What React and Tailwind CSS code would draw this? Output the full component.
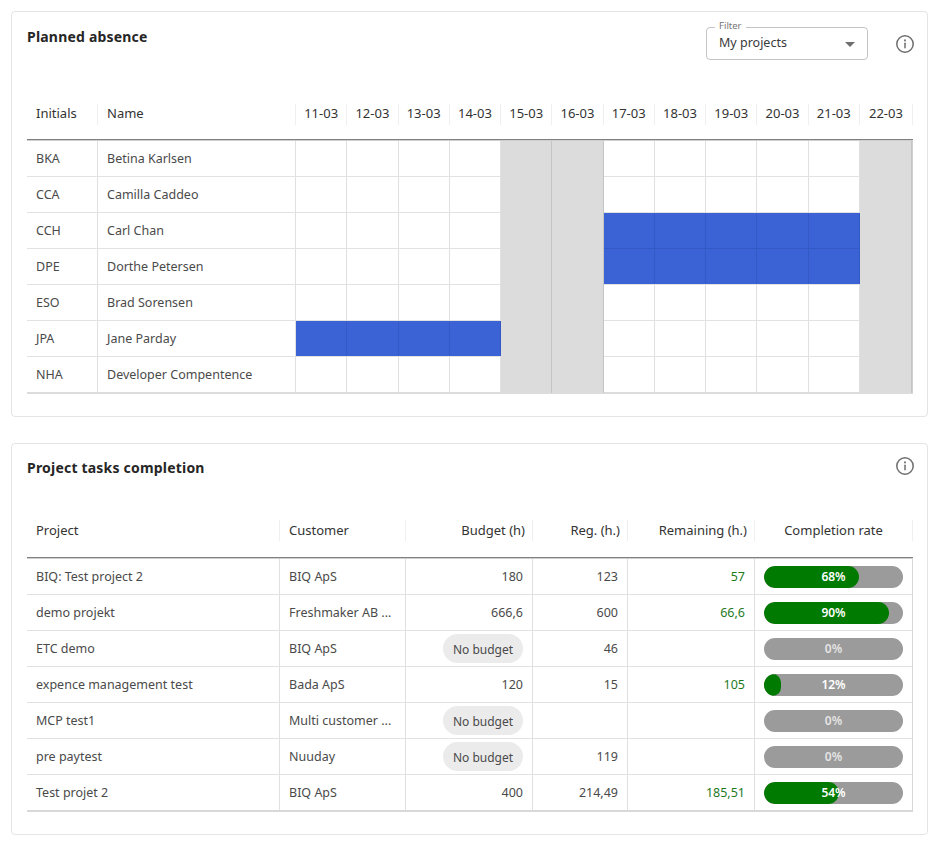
import React from 'react';

const ABSENCE_DAYS = ['11-03', '12-03', '13-03', '14-03', '15-03', '16-03', '17-03', '18-03', '19-03', '20-03', '21-03', '22-03'];
const WEEKEND = [4, 5, 11];

const PEOPLE = [
  { initials: 'BKA', name: 'Betina Karlsen', off: [] },
  { initials: 'CCA', name: 'Camilla Caddeo', off: [] },
  { initials: 'CCH', name: 'Carl Chan', off: [6, 7, 8, 9, 10] },
  { initials: 'DPE', name: 'Dorthe Petersen', off: [6, 7, 8, 9, 10] },
  { initials: 'ESO', name: 'Brad Sorensen', off: [] },
  { initials: 'JPA', name: 'Jane Parday', off: [0, 1, 2, 3] },
  { initials: 'NHA', name: 'Developer Compentence', off: [] },
];

const PROJECTS = [
  { project: 'BIQ: Test project 2', customer: 'BIQ ApS', budget: '180', reg: '123', remaining: '57', rate: 68 },
  { project: 'demo projekt', customer: 'Freshmaker AB ...', budget: '666,6', reg: '600', remaining: '66,6', rate: 90 },
  { project: 'ETC demo', customer: 'BIQ ApS', budget: null, reg: '46', remaining: '', rate: 0 },
  { project: 'expence management test', customer: 'Bada ApS', budget: '120', reg: '15', remaining: '105', rate: 12 },
  { project: 'MCP test1', customer: 'Multi customer ...', budget: null, reg: '', remaining: '', rate: 0 },
  { project: 'pre paytest', customer: 'Nuuday', budget: null, reg: '119', remaining: '', rate: 0 },
  { project: 'Test projet 2', customer: 'BIQ ApS', budget: '400', reg: '214,49', remaining: '185,51', rate: 54 },
];

const ABSENCE_GRID = 'grid grid-cols-[71px_198px_repeat(11,51.27px)_minmax(0,1fr)]';
const TASKS_GRID = 'grid grid-cols-[253px_126px_127px_95px_127px_minmax(0,1fr)]';

const InfoIcon = () => (
  <svg width="20" height="20" viewBox="0 0 20 20" fill="none" stroke="#6f6f6f" strokeWidth="1.5" strokeLinecap="round" className="shrink-0">
    <circle cx="10" cy="10" r="8.2" />
    <path d="M10 9.2v4.6" />
    <path d="M10 6.2v.3" strokeWidth="1.9" />
  </svg>
);

const HeadCell = ({ children, align = 'left' }) => (
  <div className={`flex h-[21px] items-center whitespace-nowrap border-r border-[#efefef] ${align === 'right' ? 'justify-end pr-[7px]' : align === 'center' ? 'justify-center' : 'px-[9px]'}`}>
    {children}
  </div>
);

const ProgressBar = ({ rate }) => (
  <div className="relative h-[22px] w-full overflow-hidden rounded-full bg-[#9b9b9b]">
    {rate > 0 && <div className="h-full rounded-full bg-[#007a00]" style={{ width: `${rate}%` }} />}
    <span className={`absolute inset-0 flex items-center justify-center text-[12px] font-semibold ${rate > 0 ? 'text-white' : 'text-[#e4e4e4]'}`}>
      {rate}%
    </span>
  </div>
);

const PlannedAbsence = () => (
  <section className="rounded-[4px] border border-[#e4e4e4] bg-white pb-[22px] pl-[15px] pr-[14px]">
    <div className="flex h-[85px] items-start justify-between">
      <h2 className="mt-[14px] text-[14px] font-bold tracking-[0.2px] text-[#262626]">Planned absence</h2>
      <div className="-mr-[2px] mt-[15px] flex items-center gap-[27px]">
        <div className="relative flex h-[33px] w-[162px] items-center justify-between rounded-[4px] border border-[#c4c4c4] px-[12px]">
          <span className="absolute -top-[8px] left-[8px] bg-white px-[4px] text-[9.5px] leading-[12px] text-[#757575]">Filter</span>
          <span className="text-[12.5px] text-[#3a3a3a]">My projects</span>
          <svg width="10" height="5" viewBox="0 0 10 5" className="mt-[2px]"><path d="M0 0h10L5 5z" fill="#6f6f6f" /></svg>
        </div>
        <InfoIcon />
      </div>
    </div>

    <div className={`${ABSENCE_GRID} h-[43px] items-center border-b border-[#808080] pb-[8px] text-[13px] text-[#333]`}>
      <HeadCell>Initials</HeadCell>
      <HeadCell>Name</HeadCell>
      {ABSENCE_DAYS.map((day) => (
        <HeadCell key={day} align="center">{day}</HeadCell>
      ))}
    </div>

    <div className="border-b-2 border-t border-[#dcdcdc] border-r border-r-[#cfcfcf] border-t-[#cfcfcf]">
      {PEOPLE.map((p, i) => {
        const isLast = i === PEOPLE.length - 1;
        return (
          <div key={p.initials} className={`${ABSENCE_GRID} text-[12.5px] text-[#4a4a4a] ${isLast ? 'h-[35px]' : 'h-[36px] border-b border-[#e2e2e2]'}`}>
            <div className="flex items-center border-r border-[#e0e0e0] px-[9px] pt-[1px]">{p.initials}</div>
            <div className="flex items-center border-r border-[#e0e0e0] px-[9px] pt-[1px]">{p.name}</div>
            {ABSENCE_DAYS.map((day, d) => {
              const weekend = WEEKEND.includes(d);
              const off = p.off.includes(d);
              const nextOff = !isLast && PEOPLE[i + 1].off.includes(d);
              let cell = 'border-[#e0e0e0]';
              if (off) cell = nextOff ? '-mb-px border-b border-[#3459c4] bg-[#3b63d6]' : 'border-[#3459c4] bg-[#3b63d6]';
              else if (weekend) cell = '-mb-px border-[#c4c4c4] bg-[#dcdcdc]';
              return <div key={day} className={`border-r ${cell}`} />;
            })}
          </div>
        );
      })}
    </div>
  </section>
);

const ProjectTasks = () => (
  <section className="rounded-[4px] border border-[#e4e4e4] bg-white pb-[22px] pl-[15px] pr-[14px]">
    <div className="flex h-[65px] items-start justify-between">
      <h2 className="mt-[13px] text-[14px] font-bold tracking-[0.2px] text-[#262626]">Project tasks completion</h2>
      <div className="-mr-[2px] mt-[12px]"><InfoIcon /></div>
    </div>

    <div className={`${TASKS_GRID} h-[49px] items-center border-b border-[#808080] pb-[5px] text-[13px] text-[#333]`}>
      <HeadCell>Project</HeadCell>
      <HeadCell>Customer</HeadCell>
      <HeadCell align="right">Budget (h)</HeadCell>
      <HeadCell align="right">Reg. (h.)</HeadCell>
      <HeadCell align="right">Remaining (h.)</HeadCell>
      <HeadCell align="center">Completion rate</HeadCell>
    </div>

    <div className="border-b-2 border-r border-t border-[#d8d8d8] border-t-[#cfcfcf]">
      {PROJECTS.map((row, i) => {
        const isLast = i === PROJECTS.length - 1;
        return (
          <div key={row.project} className={`${TASKS_GRID} text-[12.5px] text-[#4a4a4a] ${isLast ? 'h-[35px]' : 'h-[36px] border-b border-[#e2e2e2]'}`}>
            <div className="flex items-center border-r border-[#e0e0e0] px-[9px] pt-[1px]">{row.project}</div>
            <div className="flex items-center border-r border-[#e0e0e0] px-[9px] pt-[1px]">{row.customer}</div>
            <div className="flex items-center justify-end border-r border-[#e0e0e0] px-[9px]">
              {row.budget ? <span className="pt-[1px]">{row.budget}</span> : (
                <span className="flex h-[29px] w-[80px] items-center justify-center rounded-full bg-[#ebebeb] pt-[2px] text-[12px]">No budget</span>
              )}
            </div>
            <div className="flex items-center justify-end border-r border-[#e0e0e0] px-[9px] pt-[1px]">{row.reg}</div>
            <div className="flex items-center justify-end border-r border-[#e0e0e0] px-[9px] pt-[1px] text-[#1f7a1f]">{row.remaining}</div>
            <div className="flex items-center px-[9px]"><ProgressBar rate={row.rate} /></div>
          </div>
        );
      })}
    </div>
  </section>
);

export default function App() {
  return (
    <div className="flex min-h-[849px] w-[941px] flex-col gap-[26px] bg-white pl-[11px] pr-[13px] pt-[11px] font-['Noto_Sans','Open_Sans',sans-serif]">
      <PlannedAbsence />
      <ProjectTasks />
    </div>
  );
}
